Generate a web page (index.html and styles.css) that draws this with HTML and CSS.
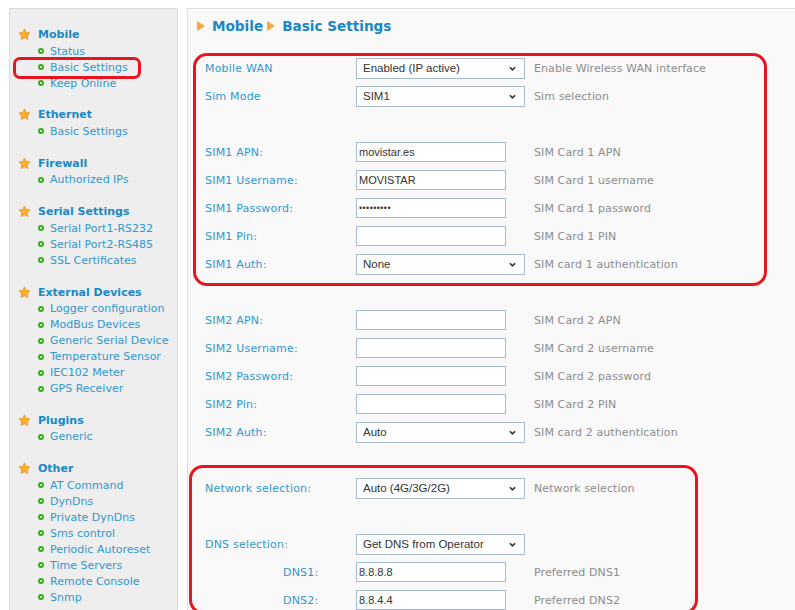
FILE: index.html
```html
<!DOCTYPE html>
<html lang="en">
<head>
<meta charset="utf-8">
<title>Mobile - Basic Settings</title>
<link rel="stylesheet" href="styles.css">
</head>
<body>
<div class="page">
  <nav class="sidebar">
    <div class="menu-group">
      <div class="menu-title"><svg class="star" viewBox="0 0 20 20"><path d="M10 1.5l2.6 5.4 5.9.8-4.3 4.1 1 5.9L10 14.9l-5.2 2.8 1-5.9L1.5 7.7l5.9-.8z"/></svg>Mobile</div>
      <a class="menu-item" href="#">Status</a>
      <a class="menu-item" href="#">Basic Settings</a>
      <a class="menu-item" href="#">Keep Online</a>
    </div>
    <div class="menu-group">
      <div class="menu-title"><svg class="star" viewBox="0 0 20 20"><path d="M10 1.5l2.6 5.4 5.9.8-4.3 4.1 1 5.9L10 14.9l-5.2 2.8 1-5.9L1.5 7.7l5.9-.8z"/></svg>Ethernet</div>
      <a class="menu-item" href="#">Basic Settings</a>
    </div>
    <div class="menu-group">
      <div class="menu-title"><svg class="star" viewBox="0 0 20 20"><path d="M10 1.5l2.6 5.4 5.9.8-4.3 4.1 1 5.9L10 14.9l-5.2 2.8 1-5.9L1.5 7.7l5.9-.8z"/></svg>Firewall</div>
      <a class="menu-item" href="#">Authorized IPs</a>
    </div>
    <div class="menu-group">
      <div class="menu-title"><svg class="star" viewBox="0 0 20 20"><path d="M10 1.5l2.6 5.4 5.9.8-4.3 4.1 1 5.9L10 14.9l-5.2 2.8 1-5.9L1.5 7.7l5.9-.8z"/></svg>Serial Settings</div>
      <a class="menu-item" href="#">Serial Port1-RS232</a>
      <a class="menu-item" href="#">Serial Port2-RS485</a>
      <a class="menu-item" href="#">SSL Certificates</a>
    </div>
    <div class="menu-group">
      <div class="menu-title"><svg class="star" viewBox="0 0 20 20"><path d="M10 1.5l2.6 5.4 5.9.8-4.3 4.1 1 5.9L10 14.9l-5.2 2.8 1-5.9L1.5 7.7l5.9-.8z"/></svg>External Devices</div>
      <a class="menu-item" href="#">Logger configuration</a>
      <a class="menu-item" href="#">ModBus Devices</a>
      <a class="menu-item" href="#">Generic Serial Device</a>
      <a class="menu-item" href="#">Temperature Sensor</a>
      <a class="menu-item" href="#">IEC102 Meter</a>
      <a class="menu-item" href="#">GPS Receiver</a>
    </div>
    <div class="menu-group">
      <div class="menu-title"><svg class="star" viewBox="0 0 20 20"><path d="M10 1.5l2.6 5.4 5.9.8-4.3 4.1 1 5.9L10 14.9l-5.2 2.8 1-5.9L1.5 7.7l5.9-.8z"/></svg>Plugins</div>
      <a class="menu-item" href="#">Generic</a>
    </div>
    <div class="menu-group">
      <div class="menu-title"><svg class="star" viewBox="0 0 20 20"><path d="M10 1.5l2.6 5.4 5.9.8-4.3 4.1 1 5.9L10 14.9l-5.2 2.8 1-5.9L1.5 7.7l5.9-.8z"/></svg>Other</div>
      <a class="menu-item" href="#">AT Command</a>
      <a class="menu-item" href="#">DynDns</a>
      <a class="menu-item" href="#">Private DynDns</a>
      <a class="menu-item" href="#">Sms control</a>
      <a class="menu-item" href="#">Periodic Autoreset</a>
      <a class="menu-item" href="#">Time Servers</a>
      <a class="menu-item" href="#">Remote Console</a>
      <a class="menu-item" href="#">Snmp</a>
    </div>
    <span class="mark mark-nav"></span>
  </nav>

  <main class="panel">
    <h1 class="crumbs"><span class="tri"></span>Mobile<span class="tri tri-next"></span>Basic Settings</h1>

    <form class="form">
      <label class="lbl">Mobile WAN</label>
      <span class="select"><select><option>Enabled (IP active)</option></select><svg class="chev" viewBox="0 0 8 5"><path d="M1 1l3 3 3-3"/></svg></span>
      <span class="desc">Enable Wireless WAN interface</span>

      <label class="lbl">Sim Mode</label>
      <span class="select"><select><option>SIM1</option></select><svg class="chev" viewBox="0 0 8 5"><path d="M1 1l3 3 3-3"/></svg></span>
      <span class="desc">Sim selection</span>

      <div class="blank"></div>

      <label class="lbl">SIM1 APN:</label>
      <span class="field"><input type="text" value="movistar.es"></span>
      <span class="desc">SIM Card 1 APN</span>

      <label class="lbl">SIM1 Username:</label>
      <span class="field"><input type="text" value="MOVISTAR"></span>
      <span class="desc">SIM Card 1 username</span>

      <label class="lbl">SIM1 Password:</label>
      <span class="field"><input type="password" value="movistar1"></span>
      <span class="desc">SIM Card 1 password</span>

      <label class="lbl">SIM1 Pin:</label>
      <span class="field"><input type="text" value=""></span>
      <span class="desc">SIM Card 1 PIN</span>

      <label class="lbl">SIM1 Auth:</label>
      <span class="select"><select><option>None</option></select><svg class="chev" viewBox="0 0 8 5"><path d="M1 1l3 3 3-3"/></svg></span>
      <span class="desc">SIM card 1 authentication</span>

      <div class="blank"></div>

      <label class="lbl">SIM2 APN:</label>
      <span class="field"><input type="text" value=""></span>
      <span class="desc">SIM Card 2 APN</span>

      <label class="lbl">SIM2 Username:</label>
      <span class="field"><input type="text" value=""></span>
      <span class="desc">SIM Card 2 username</span>

      <label class="lbl">SIM2 Password:</label>
      <span class="field"><input type="password" value=""></span>
      <span class="desc">SIM Card 2 password</span>

      <label class="lbl">SIM2 Pin:</label>
      <span class="field"><input type="text" value=""></span>
      <span class="desc">SIM Card 2 PIN</span>

      <label class="lbl">SIM2 Auth:</label>
      <span class="select"><select><option>Auto</option></select><svg class="chev" viewBox="0 0 8 5"><path d="M1 1l3 3 3-3"/></svg></span>
      <span class="desc">SIM card 2 authentication</span>

      <div class="blank"></div>

      <label class="lbl">Network selection:</label>
      <span class="select"><select><option>Auto (4G/3G/2G)</option></select><svg class="chev" viewBox="0 0 8 5"><path d="M1 1l3 3 3-3"/></svg></span>
      <span class="desc">Network selection</span>

      <div class="blank"></div>

      <label class="lbl">DNS selection:</label>
      <span class="select"><select><option>Get DNS from Operator</option></select><svg class="chev" viewBox="0 0 8 5"><path d="M1 1l3 3 3-3"/></svg></span>
      <span class="desc"></span>

      <label class="lbl lbl-sub">DNS1:</label>
      <span class="field"><input type="text" value="8.8.8.8"></span>
      <span class="desc">Preferred DNS1</span>

      <label class="lbl lbl-sub">DNS2:</label>
      <span class="field"><input type="text" value="8.8.4.4"></span>
      <span class="desc">Preferred DNS2</span>
    </form>

    <span class="mark mark-sim1"></span>
    <span class="mark mark-net"></span>
  </main>
</div>
</body>
</html>
```

FILE: styles.css
```css
html, body {
  margin: 0;
  padding: 0;
  background: #ffffff;
  overflow: hidden;
}

body {
  font-family: "DejaVu Sans", Verdana, sans-serif;
  font-size: 11px;
}

.page {
  display: flex;
  align-items: stretch;
  gap: 9px;
  padding: 8px 0 0 9px;
  min-height: 640px;
}

/* ---------- left navigation ---------- */
.sidebar {
  position: relative;
  flex: 0 0 auto;
  width: 167px;
  box-sizing: content-box;
  background: #eeeeee;
  border: 1px solid #d9d9d9;
  border-bottom: none;
  padding: 17px 0 0 0;
}

.menu-group {
  display: flex;
  flex-direction: column;
  margin-bottom: 15.4px;
}

.menu-title {
  display: flex;
  align-items: center;
  height: 17px;
  padding-left: 8px;
  font-weight: bold;
  color: #1a87c6;
}

.star {
  width: 13px;
  height: 13px;
  margin-right: 7px;
  fill: #fbb02e;
  stroke: #f08c12;
  stroke-width: 1.2;
  stroke-linejoin: round;
}

.menu-item {
  display: flex;
  align-items: center;
  height: 16px;
  padding-left: 28px;
  color: #3396d0;
  text-decoration: none;
}

.menu-item::before {
  content: "";
  width: 2px;
  height: 2px;
  border: 2px solid #3aaa1e;
  border-radius: 50%;
  background: #ffffff;
  margin-right: 6px;
  flex: 0 0 auto;
}

/* ---------- content panel ---------- */
.panel {
  position: relative;
  flex: 1 1 auto;
  background: #f9f9f9;
  border: 1px solid #dddddd;
  border-right: none;
  border-bottom: none;
  padding: 7px 0 0 0;
}

.crumbs {
  margin: 0 0 18px 0;
  padding-left: 9px;
  height: 20px;
  display: flex;
  align-items: center;
  font-size: 13.6px;
  font-weight: bold;
  color: #1a87c6;
}

.tri {
  width: 0;
  height: 0;
  border-top: 5px solid transparent;
  border-bottom: 5px solid transparent;
  border-left: 8px solid #f7a940;
  margin-right: 7px;
}

.tri-next {
  margin-left: 4px;
}

.form {
  display: grid;
  grid-template-columns: 151px 178px auto;
  grid-auto-rows: 28px;
  align-items: center;
  padding-left: 17px;
  margin: 0;
}

.blank {
  grid-column: 1 / -1;
}

.lbl {
  color: #2f97cf;
  letter-spacing: 0.2px;
}

.lbl-sub {
  padding-left: 78px;
}

.desc {
  color: #8c8c8c;
  letter-spacing: 0.1px;
}

.select {
  position: relative;
  display: block;
  width: 169px;
  height: 21px;
}

.select select {
  appearance: none;
  -webkit-appearance: none;
  display: block;
  width: 169px;
  height: 21px;
  margin: 0;
  padding: 0 20px 0 6px;
  border: 1px solid #a6b8ca;
  border-radius: 0;
  background: #ffffff;
  font-family: "Liberation Sans", Arial, sans-serif;
  font-size: 11.5px;
  color: #333333;
  outline: none;
}

.chev {
  position: absolute;
  right: 9px;
  top: 8px;
  width: 7px;
  height: 5px;
  fill: none;
  stroke: #333333;
  stroke-width: 1.8;
  pointer-events: none;
}

.field {
  display: block;
}

.field input {
  display: block;
  box-sizing: border-box;
  width: 150px;
  height: 20px;
  margin: 0;
  padding: 0 2px;
  border: 1px solid #a6b8ca;
  border-radius: 0;
  background: #ffffff;
  font-family: "Liberation Sans", Arial, sans-serif;
  font-size: 11px;
  color: #333333;
  outline: none;
}

.field input[type="password"] {
  font-size: 9px;
  letter-spacing: 0.4px;
}

/* ---------- red highlight frames drawn over the page ---------- */
.mark {
  position: absolute;
  box-sizing: border-box;
  border: 3.5px solid #e8141f;
  pointer-events: none;
}

.mark-nav {
  left: 3px;
  top: 48px;
  width: 128px;
  height: 22px;
  border-width: 3px;
  border-radius: 7px;
}

.mark-sim1 {
  left: 5px;
  top: 44px;
  width: 574px;
  height: 233px;
  border-radius: 14px;
}

.mark-net {
  left: 1px;
  top: 456px;
  width: 509px;
  height: 149px;
  border-radius: 14px;
}
```
